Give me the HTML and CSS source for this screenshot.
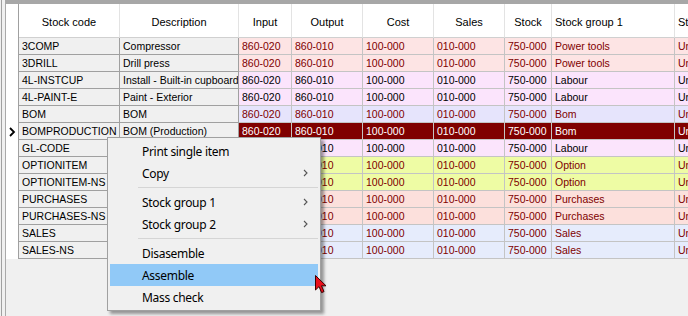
FILE: index.html
```html
<!DOCTYPE html>
<html>
<head>
<meta charset="utf-8">
<link rel="stylesheet" href="styles.css">
</head>
<body>
<div class="frame">
  <div class="grid">
    <div class="row head">
      <div class="ind"></div>
      <div class="hc">Stock code</div>
      <div class="hc">Description</div>
      <div class="hc">Input</div>
      <div class="hc">Output</div>
      <div class="hc">Cost</div>
      <div class="hc">Sales</div>
      <div class="hc">Stock</div>
      <div class="hc left">Stock group 1</div>
      <div class="hc left">Stock group 2</div>
    </div>
    <div class="row pink red">
      <div class="ind"></div><div class="fx">3COMP</div><div class="fx">Compressor</div>
      <div class="dc">860-020</div><div class="dc">860-010</div><div class="dc">100-000</div><div class="dc">010-000</div><div class="dc">750-000</div><div class="dc">Power tools</div><div class="dc">Unassigned</div>
    </div>
    <div class="row pink red">
      <div class="ind"></div><div class="fx">3DRILL</div><div class="fx">Drill press</div>
      <div class="dc">860-020</div><div class="dc">860-010</div><div class="dc">100-000</div><div class="dc">010-000</div><div class="dc">750-000</div><div class="dc">Power tools</div><div class="dc">Unassigned</div>
    </div>
    <div class="row lav">
      <div class="ind"></div><div class="fx">4L-INSTCUP</div><div class="fx">Install - Built-in cupboard</div>
      <div class="dc">860-020</div><div class="dc">860-010</div><div class="dc">100-000</div><div class="dc">010-000</div><div class="dc">750-000</div><div class="dc">Labour</div><div class="dc">Unassigned</div>
    </div>
    <div class="row lav">
      <div class="ind"></div><div class="fx">4L-PAINT-E</div><div class="fx">Paint - Exterior</div>
      <div class="dc">860-020</div><div class="dc">860-010</div><div class="dc">100-000</div><div class="dc">010-000</div><div class="dc">750-000</div><div class="dc">Labour</div><div class="dc">Unassigned</div>
    </div>
    <div class="row blue red">
      <div class="ind"></div><div class="fx">BOM</div><div class="fx">BOM</div>
      <div class="dc">860-020</div><div class="dc">860-010</div><div class="dc">100-000</div><div class="dc">010-000</div><div class="dc">750-000</div><div class="dc">Bom</div><div class="dc">Unassigned</div>
    </div>
    <div class="row sel">
      <div class="ind"><svg class="mark" width="7" height="10" viewBox="0 0 7 10"><path d="M1 1 L5 5 L1 9" fill="none" stroke="#000" stroke-width="1.8"/></svg></div><div class="fx">BOMPRODUCTION</div><div class="fx">BOM (Production)</div>
      <div class="dc">860-020</div><div class="dc">860-010</div><div class="dc">100-000</div><div class="dc">010-000</div><div class="dc">750-000</div><div class="dc">Bom</div><div class="dc">Unassigned</div>
    </div>
    <div class="row lav">
      <div class="ind"></div><div class="fx">GL-CODE</div><div class="fx"></div>
      <div class="dc"></div><div class="dc">860-010</div><div class="dc">100-000</div><div class="dc">010-000</div><div class="dc">750-000</div><div class="dc">Labour</div><div class="dc">Unassigned</div>
    </div>
    <div class="row yel red">
      <div class="ind"></div><div class="fx">OPTIONITEM</div><div class="fx"></div>
      <div class="dc"></div><div class="dc">860-010</div><div class="dc">100-000</div><div class="dc">010-000</div><div class="dc">750-000</div><div class="dc">Option</div><div class="dc">Unassigned</div>
    </div>
    <div class="row yel red">
      <div class="ind"></div><div class="fx">OPTIONITEM-NS</div><div class="fx"></div>
      <div class="dc"></div><div class="dc">860-010</div><div class="dc">100-000</div><div class="dc">010-000</div><div class="dc">750-000</div><div class="dc">Option</div><div class="dc">Unassigned</div>
    </div>
    <div class="row salmon red">
      <div class="ind"></div><div class="fx">PURCHASES</div><div class="fx"></div>
      <div class="dc"></div><div class="dc">860-010</div><div class="dc">100-000</div><div class="dc">010-000</div><div class="dc">750-000</div><div class="dc">Purchases</div><div class="dc">Unassigned</div>
    </div>
    <div class="row salmon red">
      <div class="ind"></div><div class="fx">PURCHASES-NS</div><div class="fx"></div>
      <div class="dc"></div><div class="dc">860-010</div><div class="dc">100-000</div><div class="dc">010-000</div><div class="dc">750-000</div><div class="dc">Purchases</div><div class="dc">Unassigned</div>
    </div>
    <div class="row sky red">
      <div class="ind"></div><div class="fx">SALES</div><div class="fx"></div>
      <div class="dc"></div><div class="dc">860-010</div><div class="dc">100-000</div><div class="dc">010-000</div><div class="dc">750-000</div><div class="dc">Sales</div><div class="dc">Unassigned</div>
    </div>
    <div class="row sky red">
      <div class="ind"></div><div class="fx">SALES-NS</div><div class="fx"></div>
      <div class="dc"></div><div class="dc">860-010</div><div class="dc">100-000</div><div class="dc">010-000</div><div class="dc">750-000</div><div class="dc">Sales</div><div class="dc">Unassigned</div>
    </div>
  </div>
</div>

<div class="menu">
  <div class="mi">Print single item</div>
  <div class="mi">Copy<svg class="sub" width="5" height="8" viewBox="0 0 5 8"><path d="M1 1 L4 4 L1 7" fill="none" stroke="#555" stroke-width="1.1"/></svg></div>
  <div class="sep"></div>
  <div class="mi">Stock group 1<svg class="sub" width="5" height="8" viewBox="0 0 5 8"><path d="M1 1 L4 4 L1 7" fill="none" stroke="#555" stroke-width="1.1"/></svg></div>
  <div class="mi">Stock group 2<svg class="sub" width="5" height="8" viewBox="0 0 5 8"><path d="M1 1 L4 4 L1 7" fill="none" stroke="#555" stroke-width="1.1"/></svg></div>
  <div class="sep"></div>
  <div class="mi">Disasemble</div>
  <div class="mi hot">Assemble</div>
  <div class="mi">Mass check</div>
</div>

<svg class="cursor" width="13" height="20" viewBox="0 0 13 20">
  <path d="M0.5 0.5 L0.5 15 L4 11.6 L6.6 17.6 L9 16.6 L6.5 10.8 L11 10.8 Z" fill="#e8101c" stroke="#3a0000" stroke-width="1" stroke-linejoin="round"/>
</svg>
</body>
</html>
```

FILE: styles.css
```css
html, body {
  margin: 0;
  padding: 0;
}
body {
  width: 688px;
  height: 316px;
  overflow: hidden;
  background: #f0f0f0;
  font-family: "Liberation Sans", Arial, sans-serif;
  font-size: 10.5px;
  color: #000;
  position: relative;
}
.frame {
  margin-left: 1px;
  border-left: 1px solid #a0a0a0;
  padding-left: 3px;
  height: 316px;
  box-sizing: border-box;
}
.grid {
  border-left: 1px solid #a9a9a9;
  border-top: 4px solid #a7a7a7;
  height: 316px;
  box-sizing: border-box;
  overflow: hidden;
  background: #f0f0f0;
}
.row {
  display: grid;
  grid-template-columns: 13px 101px 119px 53px 71px 71px 71px 47px 123px 120px;
  width: 789px;
}
.row > div {
  box-sizing: border-box;
  height: 17px;
  line-height: 16px;
  padding-left: 3px;
  white-space: nowrap;
  overflow: hidden;
}
.row > .ind {
  background: #fff;
  border-right: 1px solid #a0a0a0;
  padding-left: 0;
  display: flex;
  align-items: center;
  justify-content: center;
}
.mark {
  display: block;
  margin-left: 1px;
}
.head > div {
  height: 34px;
  background: #fff;
}
.head > .hc {
  border-right: 1px solid #e3e3e3;
  border-bottom: 1px solid #d0d0d0;
  display: flex;
  align-items: center;
  justify-content: center;
  padding: 3px 0 0 0;
  line-height: 14px;
  font-size: 11px;
}
.head > .hc.left {
  justify-content: flex-start;
  padding-left: 3px;
}
.row > .fx {
  background: #f0f0f0;
  border-right: 1px solid #a0a0a0;
  border-bottom: 1px solid #a0a0a0;
  color: #000;
}
.row > .dc {
  border-right: 1px solid #c4c4c4;
  border-bottom: 1px solid #c4c4c4;
}
.red > .dc { color: #800000; }
.pink > .dc { background: #fde4e4; }
.lav > .dc { background: #fbe4fc; }
.blue > .dc { background: #e6e4fc; }
.yel > .dc { background: #eefca4; }
.salmon > .dc { background: #fce0dc; }
.sky > .dc { background: #e6ecfc; }
.sel > .dc { background: #800000; color: #fff; }

.menu {
  position: absolute;
  left: 107px;
  top: 137px;
  width: 214px;
  box-sizing: border-box;
  background: #f0f0f0;
  border: 1px solid #a0a0a0;
  padding: 2px;
  box-shadow: 3px 3px 3px rgba(0, 0, 0, 0.38);
  font-family: "Noto Sans", "Segoe UI", sans-serif;
  font-size: 12px;
  letter-spacing: -0.3px;
  color: #000;
}
.mi {
  height: 22px;
  line-height: 21px;
  padding-left: 32px;
  display: flex;
  align-items: center;
  justify-content: space-between;
  padding-right: 10px;
}
.mi.hot {
  background: #91c9f7;
}
.sub {
  display: block;
}
.sep {
  height: 7px;
  margin-left: 28px;
  display: flex;
  align-items: center;
}
.sep::before {
  content: "";
  display: block;
  width: 100%;
  border-top: 1px solid #d5d5d5;
}
.cursor {
  position: absolute;
  left: 315px;
  top: 275px;
}
```
